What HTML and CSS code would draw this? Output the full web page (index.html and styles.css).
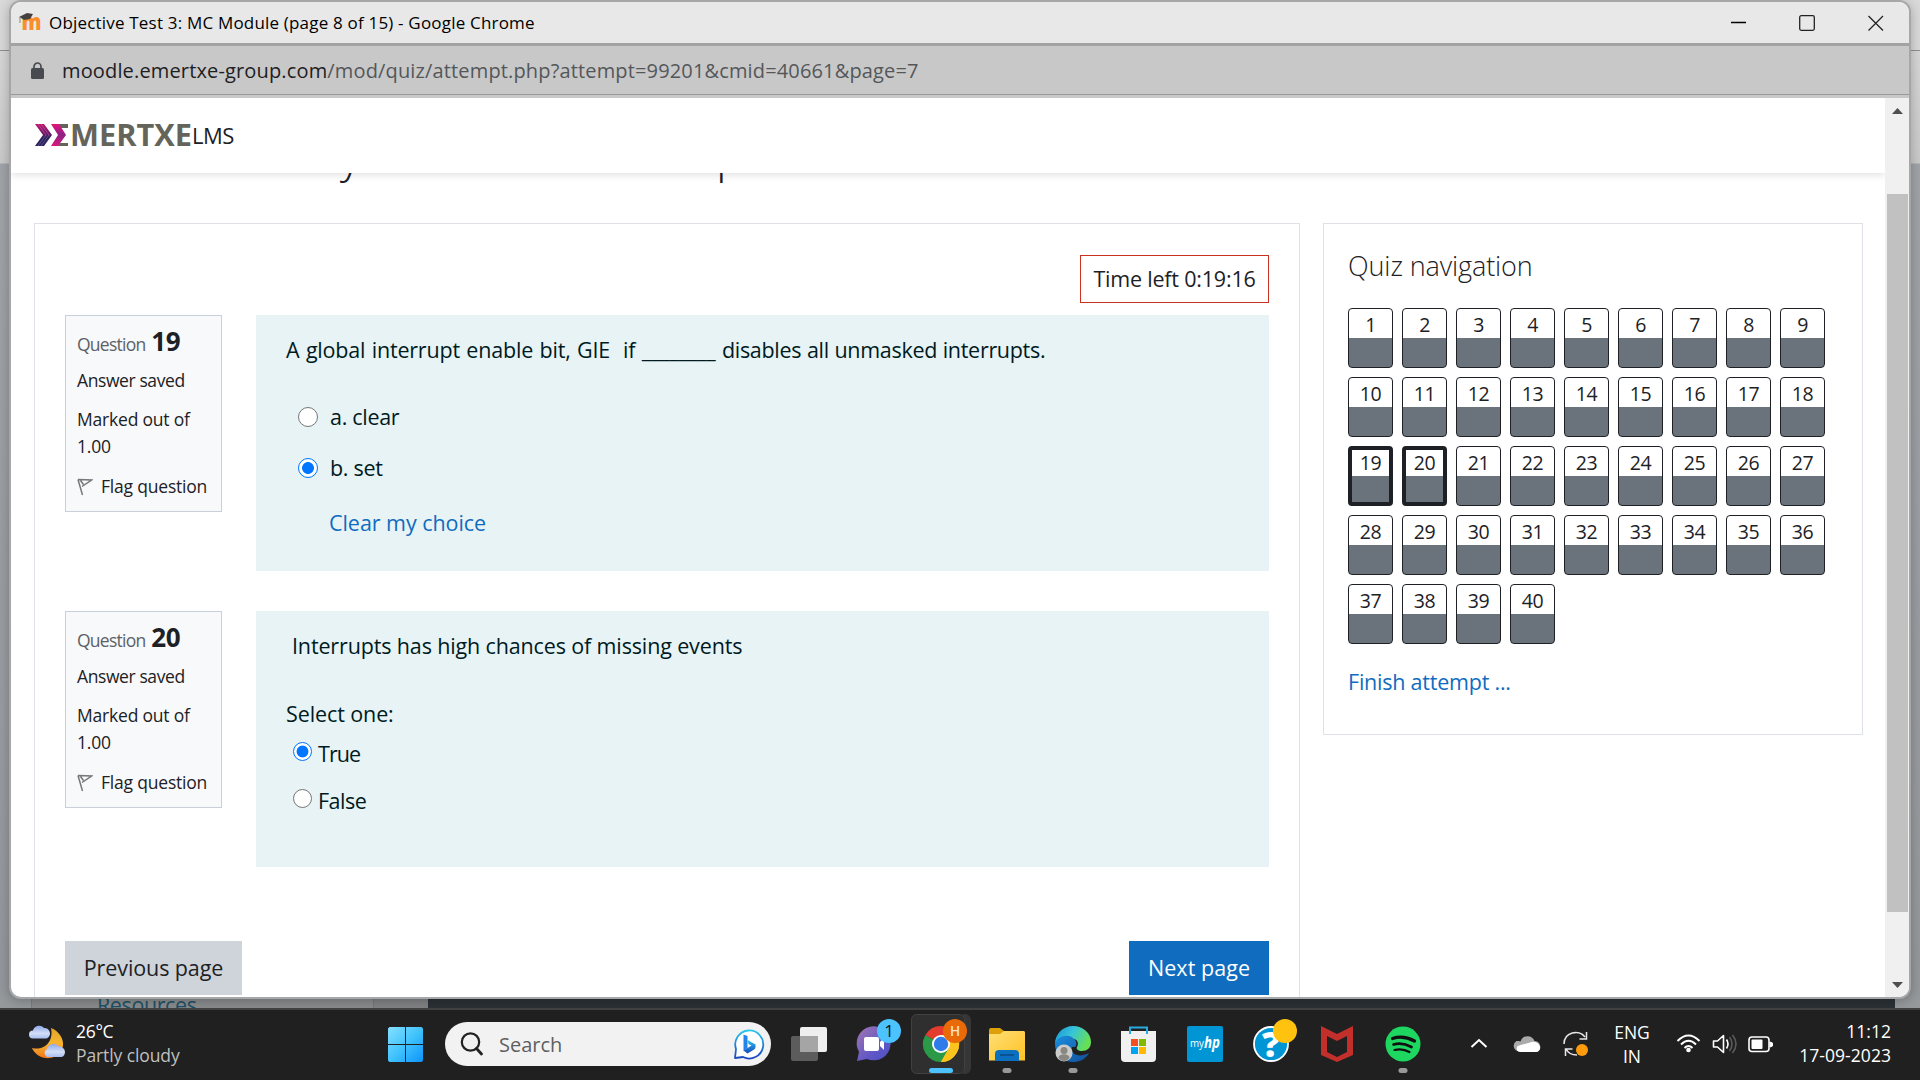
FILE: index.html
```html
<!DOCTYPE html>
<html lang="en">
<head>
<meta charset="utf-8">
<title>Objective Test 3: MC Module (page 8 of 15)</title>
<link rel="stylesheet" href="styles.css">
</head>
<body>
<div class="desktop">
  <div class="backdrop">
    <div class="backdrop-tabs"></div>
    <div class="backdrop-tools"></div>
    <div class="backdrop-page"></div>
    <div class="backdrop-foot">
      <div class="foot-side"></div>
      <div class="foot-list"><span>Resources</span></div>
      <div class="foot-gap"></div>
      <div class="foot-dark"></div>
      <div class="foot-side foot-right"></div>
    </div>
  </div>

  <div class="window">
    <div class="titlebar">
      <svg class="favicon" width="25" height="20" viewBox="0 0 25 20"><text x="3.5" y="18" font-family="Open Sans, sans-serif" font-weight="800" font-size="22" textLength="20" lengthAdjust="spacingAndGlyphs" fill="#f98e2b">m</text><path d="M1 5L9 1l6 1-3 5-6 1-3-2z" fill="#45403f"/><path d="M2 5v6" stroke="#8b8580" stroke-width="1"/></svg>
      <span class="title-text">Objective Test 3: MC Module (page 8 of 15) - Google Chrome</span>
      <svg class="controls" width="153" height="18" viewBox="0 0 153 18"><path d="M0 8.5h15" stroke="#000" stroke-width="1.3"/><rect x="68.7" y="1.7" width="14.6" height="14.6" rx="1.5" fill="none" stroke="#222" stroke-width="1.3"/><path d="M137.500 2l14.500 14.500M152 2l-14.500 14.500" stroke="#222" stroke-width="1.3"/></svg>
    </div>
    <div class="addressbar">
      <svg width="13" height="17" viewBox="0 0 13 17"><path d="M3 7V4.500a3.500 3.500 0 0 1 7 0V7" fill="none" stroke="#474b4f" stroke-width="1.7"/><rect y="6" width="13" height="11" rx="1.5" fill="#474b4f"/></svg>
      <span class="url"><b>moodle.emertxe-group.com</b>/mod/quiz/attempt.php?attempt=99201&amp;cmid=40661&amp;page=7</span>
    </div>
    <div class="viewport">
      <div class="page">
        <header class="site-header">
          <svg class="logo" width="158" height="26" viewBox="0 0 158 26">
            <defs>
              <linearGradient id="lg1" x1="0" y1="0" x2="0" y2="1"><stop offset="0" stop-color="#c01572"/><stop offset=".5" stop-color="#641a68"/><stop offset=".6" stop-color="#30235f"/><stop offset="1" stop-color="#2a2360"/></linearGradient>
              <linearGradient id="lg2" x1="0" y1="0" x2="0" y2="1"><stop offset="0" stop-color="#e3157a"/><stop offset=".5" stop-color="#8c2185"/><stop offset="1" stop-color="#e0167b"/></linearGradient>
            </defs>
            <path d="M0 2h9l8 11-8 11H0l8-11z" fill="url(#lg1)"/>
            <path d="M3 2l8 11-8 11M6 2l8 11-8 11" fill="none" stroke="#fff" stroke-opacity=".25" stroke-width=".8"/>
            <path d="M22 2h11v4h-8l5 7-6 8h9v3H20l5-6z" fill="#64645b"/>
            <path d="M16 2h8l7 11-8 11h-7l7-11z" fill="url(#lg2)"/>
            <text x="35" y="24" font-family="Open Sans, sans-serif" font-weight="700" font-size="30.500" textLength="122" lengthAdjust="spacingAndGlyphs" fill="#64645b">MERTXE</text>
          </svg>
          <span class="logo-lms">LMS</span>
        </header>
        <h1 class="page-heading"><span class="heading-y">y</span><span>p</span></h1>
        <div class="columns">
          <main class="card quiz">
            <div class="timer">Time left 0:19:16</div>

            <section class="question">
              <aside class="info">
                <h3>Question <b>19</b></h3>
                <p class="state">Answer saved</p>
                <p class="grade">Marked out of<br>1.00</p>
                <p class="flag"><svg width="16" height="18" viewBox="0 0 16 18"><path d="M1 1.500L5.500 17M1 1.500L14.500 2 5 8.500M3.500 2.500l3 4" fill="none" stroke="#777" stroke-width="1.5"/></svg>Flag question</p>
              </aside>
              <div class="formulation">
                <p class="qtext q19">A global interrupt enable bit, GIE &nbsp;if <span class="blank">________</span> <span class="rest">disables all unmasked interrupts.</span></p>
                <label class="choice first"><input type="radio" name="q19">a. clear</label>
                <label class="choice"><input type="radio" name="q19" checked>b. set</label>
                <a class="clear">Clear my choice</a>
              </div>
            </section>

            <section class="question">
              <aside class="info">
                <h3>Question <b>20</b></h3>
                <p class="state">Answer saved</p>
                <p class="grade">Marked out of<br>1.00</p>
                <p class="flag"><svg width="16" height="18" viewBox="0 0 16 18"><path d="M1 1.500L5.500 17M1 1.500L14.500 2 5 8.500M3.500 2.500l3 4" fill="none" stroke="#777" stroke-width="1.5"/></svg>Flag question</p>
              </aside>
              <div class="formulation">
                <p class="qtext q20">Interrupts has high chances of missing events</p>
                <p class="prompt">Select one:</p>
                <label class="tf"><input type="radio" name="q20" checked>True</label>
                <label class="tf"><input type="radio" name="q20">False</label>
              </div>
            </section>

            <div class="pager">
              <button class="btn secondary">Previous page</button>
              <button class="btn primary">Next page</button>
            </div>
          </main>

          <aside class="card nav">
            <h2>Quiz navigation</h2>
            <div class="nav-grid">
              <a>1</a><a>2</a><a>3</a><a>4</a><a>5</a><a>6</a><a>7</a><a>8</a><a>9</a>
              <a>10</a><a>11</a><a>12</a><a>13</a><a>14</a><a>15</a><a>16</a><a>17</a><a>18</a>
              <a class="current">19</a><a class="current">20</a><a>21</a><a>22</a><a>23</a><a>24</a><a>25</a><a>26</a><a>27</a>
              <a>28</a><a>29</a><a>30</a><a>31</a><a>32</a><a>33</a><a>34</a><a>35</a><a>36</a>
              <a>37</a><a>38</a><a>39</a><a>40</a>
            </div>
            <a class="finish">Finish attempt ...</a>
          </aside>
        </div>
      </div>
      <div class="scrollbar">
        <svg width="11" height="6" viewBox="0 0 11 6"><path d="M0 6L5.500 0 11 6z" fill="#505050"/></svg>
        <div class="thumb"></div>
        <svg class="down" width="11" height="6" viewBox="0 0 11 6"><path d="M0 0h11L5.500 6z" fill="#505050"/></svg>
      </div>
    </div>
  </div>

  <footer class="taskbar">
    <svg class="weather" width="38" height="36" viewBox="0 0 38 36">
      <defs><linearGradient id="moon" x1="0" y1="0" x2="0" y2="1"><stop offset="0" stop-color="#e0a32c"/><stop offset=".5" stop-color="#f7b52f"/><stop offset="1" stop-color="#f0781b"/></linearGradient>
      <linearGradient id="cl" x1="0" y1="0" x2="0" y2="1"><stop offset="0" stop-color="#8fa9ea"/><stop offset=".6" stop-color="#d3dff8"/><stop offset="1" stop-color="#a9bdf0"/></linearGradient></defs>
      <path d="M22 4c8 3 13 11 12 18-2 9-10 13-18 12C10 33 5 29 3 24c12 3 22-6 19-20z" fill="url(#moon)"/>
      <path d="M4 14.500a4 4 0 0 1 0-8c1-5 8-6.500 11-2.500 4-.5 6 3 6 5.500s-2 5-4 5z" fill="url(#cl)"/>
      <path d="M18 33a4.500 4.500 0 0 1 0-8c1-5 8-6.500 11-3 4 0 7 3 7 6s-2 5-4 5z" fill="url(#cl)"/>
    </svg>
    <div class="weather-text"><span>26°C</span><span class="dim">Partly cloudy</span></div>
    <svg class="start" width="35" height="35" viewBox="0 0 35 35">
      <defs><linearGradient id="win" x1="0" y1="0" x2="1" y2="1"><stop offset="0" stop-color="#86e0ff"/><stop offset=".5" stop-color="#41c3fc"/><stop offset="1" stop-color="#0c94fb"/></linearGradient></defs>
      <path d="M1.500 0H17v17H0V1.500zM18 0h15.500L35 1.500V17H18zM0 18h17v17H1.500L0 33.500zM18 18h17v15.500L33.500 35H18z" fill="url(#win)"/>
    </svg>
    <div class="search">
      <svg width="24" height="24" viewBox="0 0 24 24"><circle cx="10.500" cy="10" r="8.700" fill="none" stroke="#222" stroke-width="2.200"/><path d="M16.500 16.500l5 5.500" stroke="#222" stroke-width="2.800" stroke-linecap="round"/></svg>
      <span>Search</span>
      <svg class="bing" width="32" height="32" viewBox="0 0 32 32">
        <defs><linearGradient id="bg" x1="0" y1="0" x2="0" y2="1"><stop offset="0" stop-color="#28c7ee"/><stop offset="1" stop-color="#1b45bd"/></linearGradient></defs>
        <path d="M2 30l1-9A14 14 0 1 1 10 29z" fill="#fff" stroke="url(#bg)" stroke-width="1.800" stroke-linejoin="round"/>
        <path d="M10.500 6.500l4 1.500v12l-4 3z" fill="#2583ec"/><path d="M14.500 12l8 4.500c.5 4-1 5-3 6l-5 3-4-3 8-5-3-1.500z" fill="url(#bg)"/>
      </svg>
    </div>
    <nav class="apps">
      <svg viewBox="0 0 66 72"><rect x="15" y="28" width="27" height="25" rx="2" fill="#5c5c5c"/><rect x="24" y="19" width="27" height="25" rx="2" fill="#efefef"/><path d="M24 28h18v16H25l-1-1z" fill="#a5a5a5"/></svg>
      <svg viewBox="0 0 66 72"><defs><linearGradient id="chat" x1="0" y1="0" x2="1" y2="1"><stop offset="0" stop-color="#a477b0"/><stop offset=".6" stop-color="#6258c5"/><stop offset="1" stop-color="#4b50c5"/></linearGradient></defs><path d="M15 53l2-9a17 17 0 1 1 8 7z" fill="url(#chat)"/><rect x="22" y="29" width="15" height="14" rx="2" fill="#fff"/><path d="M38 34l4-4v12l-4-4z" fill="#fff"/><circle cx="47" cy="23" r="12" fill="#4cc2ff"/><text x="47" y="29" text-anchor="middle" font-family="Open Sans, sans-serif" font-size="17" fill="#111">1</text></svg>
      <svg viewBox="0 0 66 72"><path d="M55 6h2a6 6 0 0 1 6 6v48a6 6 0 0 1-6 6h-2z" fill="#363636"/><rect x="3.500" y="6.500" width="53" height="59" rx="5" fill="#2f2f2f" stroke="#414141"/><path d="M33 36L17.400 27A18 18 0 0 1 48.600 27z" fill="#e33b2e"/><path d="M33 36L48.600 27A18 18 0 0 1 33 54z" fill="#fcc31e"/><path d="M17.400 27A18 18 0 0 0 33 54L40.800 40.500 33 36z" fill="#2a9a48"/><path d="M33 27h15.600a18 18 0 0 1-15.600 27l7.800-13.500z" fill="#fcc31e"/><circle cx="33" cy="36" r="9" fill="#fff"/><circle cx="33" cy="36" r="7.200" fill="#2f7bea"/><circle cx="47" cy="23" r="12" fill="#e96a07"/><text x="47" y="28" text-anchor="middle" font-family="Open Sans, sans-serif" font-size="13.500" font-weight="600" fill="#ffe3cc">H</text><rect x="21" y="60" width="24" height="5" rx="2.500" fill="#4cc2ff"/></svg>
      <svg viewBox="0 0 66 72"><defs><linearGradient id="fold" x1="0" y1="0" x2="1" y2="1"><stop offset="0" stop-color="#ffdf76"/><stop offset="1" stop-color="#fec224"/></linearGradient></defs><path d="M15 22q0-2 2-2h9l4 3v4H15z" fill="#dda008"/><path d="M15 26h11l4-3h20l1 1v28.500H15z" fill="url(#fold)"/><path d="M21 53v-7q0-4 4-4h16q4 0 4 4v7z" fill="#0c70c0"/><path d="M26 47h14" stroke="#0a4880" stroke-width="1.500"/><rect x="28.500" y="60" width="9" height="5" rx="2.500" fill="#999"/></svg>
      <svg viewBox="0 0 66 72"><defs><linearGradient id="ed" x1="0" y1="0" x2="1" y2=".4"><stop offset="0" stop-color="#1992d6"/><stop offset=".5" stop-color="#36c4da"/><stop offset="1" stop-color="#66df57"/></linearGradient><linearGradient id="ed2" x1="0" y1="0" x2="1" y2="1"><stop offset="0" stop-color="#1a8fde"/><stop offset="1" stop-color="#124e99"/></linearGradient></defs><path d="M15 36c0-10 8-18 18-18s18 7 18 16c0 6-4 9-9 9-4 0-6-2-5-4 2-3 1-8-4-8-8 0-13 2-18 5z" fill="url(#ed)"/><path d="M15 36c2-8 14-11 19-5 3 3 3 6 1 8h-3c-2 8 8 11 17 6-4 7-10 9-16 9-10 0-18-8-18-18z" fill="url(#ed2)"/><circle cx="24" cy="45" r="8.500" fill="#ccc"/><circle cx="24" cy="42.500" r="3.500" fill="#8a8680"/><path d="M18.500 50c0-5 11-5 11 0-3 4-8 4-11 0z" fill="#8a8680"/><rect x="28.500" y="60" width="9" height="5" rx="2.500" fill="#999"/></svg>
      <svg viewBox="0 0 66 72"><path d="M15 23h35v27q0 4-4 4H19q-4 0-4-4z" fill="#f0f0f0"/><path d="M24 26v-6.500h17V26" fill="none" stroke="#29aae1" stroke-width="2"/><path d="M25 31h7v7h-7z" fill="#f25022"/><path d="M33 31h7v7h-7z" fill="#7fba00"/><path d="M25 39h7v7h-7z" fill="#00a4ef"/><path d="M33 39h7v7h-7z" fill="#ffb900"/></svg>
      <svg viewBox="0 0 66 72"><rect x="15" y="18" width="36" height="36" rx="2" fill="#0096d6"/><text x="18" y="39" font-family="Open Sans, sans-serif" font-size="10" fill="#fff" textLength="14" lengthAdjust="spacingAndGlyphs">my</text><text x="32" y="40" font-family="Open Sans, sans-serif" font-size="16" font-style="italic" font-weight="700" fill="#fff" textLength="16" lengthAdjust="spacingAndGlyphs">hp</text></svg>
      <svg viewBox="0 0 66 72"><circle cx="33" cy="36" r="17" fill="#0096d6" stroke="#fff" stroke-width="1.800"/><text x="33" y="49" text-anchor="middle" font-family="Open Sans, sans-serif" font-size="36" font-weight="800" fill="#fff">?</text><circle cx="47" cy="23" r="12" fill="#ffc20e"/></svg>
      <svg viewBox="0 0 66 72"><path d="M17 18l16 8 16-8v29l-16 7-16-7zM23 28v16l10 5 10-5V28l-10 5z" fill="#c32f2b" fill-rule="evenodd"/></svg>
      <svg viewBox="0 0 66 72"><circle cx="33" cy="36" r="17.500" fill="#1ed760"/><g fill="none" stroke="#101010" stroke-linecap="round"><path d="M22.500 30.500q11-3.500 22 2.500" stroke-width="3.200"/><path d="M23.500 36.500q9-2.500 18 2.500" stroke-width="2.700"/><path d="M24.500 42q8-2 15 2" stroke-width="2.200"/></g><rect x="28.500" y="60" width="9" height="5" rx="2.500" fill="#999"/></svg>
    </nav>
    <svg class="tray-icons" width="132" height="72" viewBox="0 0 132 72">
      <path d="M8.500 39l7.500-7 7.500 7" fill="none" stroke="#fff" stroke-width="2"/>
      <g transform="translate(-1.500 0)"><path d="M56 43a5.500 5.500 0 0 1-1-10c2 0 3 0 4 .5 2-7 12-7 14-.5 6 0 8 8 3 11z" fill="#aaa"/><path d="M56 43c-1-1-1-3 0-5l14-4c7-2 11 6 7 9q-1 1-3 1H59q-2 0-3-1z" fill="#fff"/></g>
      <g fill="none" stroke="#e8e8e8" stroke-width="1.500"><path d="M101 36c0-12 15-15 21-7M123.500 24v7h-7"/><path d="M114 47c-5 0-9-2-11-6M102.500 48v-7h7"/></g><circle cx="119" cy="42" r="6" fill="#ff9a0c"/>
    </svg>
    <div class="lang"><span>ENG</span><span>IN</span></div>
    <svg class="status" width="98" height="72" viewBox="0 0 98 72">
      <g fill="none" stroke="#fff" stroke-width="1.900"><path d="M1.500 33q11-11 22 0M5 36.500q7.500-7.500 15 0M8.500 40q4-4 8 0"/></g><circle cx="12.500" cy="42" r="2.300" fill="#fff"/>
      <path d="M37.500 33h4l6-5.500v17l-6-5.500h-4z" fill="none" stroke="#fff" stroke-width="1.600" stroke-linejoin="round"/><path d="M50.500 31.500q3 4.500 0 9" fill="none" stroke="#fff" stroke-width="1.600"/><path d="M53.500 29q5 7 0 14M56.500 27q7 9 0 18" fill="none" stroke="#5a5a5a" stroke-width="1.600"/>
      <rect x="73" y="29" width="20" height="14.500" rx="3" fill="none" stroke="#fff" stroke-width="1.600"/><rect x="75.500" y="31.500" width="11" height="9.500" rx="1" fill="#fff"/><path d="M94 34l2.500 1v3L94 39z" fill="#fff" stroke="#fff"/>
    </svg>
    <div class="clock"><span>11:12</span><span>17-09-2023</span></div>
  </footer>
</div>
</body>
</html>
```
FILE: styles.css
```css
* { box-sizing: border-box; }
html, body { margin: 0; padding: 0; }
body {
  font-family: "Open Sans", "Noto Sans", sans-serif;
  color: #1d2125;
  overflow: hidden;
}
p, h1, h2, h3 { margin: 0; font-weight: 400; }

.desktop {
  position: relative;
  width: 1920px;
  height: 1080px;
  display: flex;
  flex-direction: column;
  overflow: hidden;
}

/* Browser window that sits behind the quiz popup */
.backdrop { height: 1008px; display: flex; flex-direction: column; }
.backdrop-tabs { height: 51px; background: #d9d9d9; border-bottom: 1px solid #8f8f8f; }
.backdrop-tools { height: 112px; background: linear-gradient(#d7d7d7, #cacaca); }
.backdrop-page { flex: 1; background: linear-gradient(#a0a4a8, #94979b); border-top: 1px solid #b4b6b9; }
.backdrop-foot { height: 13px; display: flex; overflow: hidden; }
.foot-side { width: 31px; background: #96999c; }
.foot-list { width: 342px; background: #8b8c8d; padding-left: 65px; border-left: 1px solid #7c7e80; }
.foot-list span { display: block; margin-top: -3px; font-size: 21.5px; line-height: 26px; letter-spacing: -.4px; color: #1d5269; }
.foot-gap { width: 55px; background: #828384; border-left: 1px solid #777; }
.foot-dark { flex: 1; background: #2b3136; }
.foot-right { width: 25px; }

/* Popup window */
.window {
  position: absolute;
  left: 11px;
  top: 2px;
  width: 1898px;
  height: 995px;
  display: flex;
  flex-direction: column;
  background: #fff;
  border-radius: 10px;
  overflow: hidden;
}
.desktop::before {
  content: "";
  position: absolute;
  left: 9px;
  top: 0;
  width: 1902px;
  height: 999px;
  border-radius: 12px;
  background: #a6a7a8;
  box-shadow: 0 2px 12px rgba(0, 0, 0, .25);
}
.titlebar {
  height: 44px;
  padding: 0 25px 3px 7px;
  display: flex;
  align-items: center;
  background: #e8e8e8;
  border-bottom: 3px solid #a3a3a3;
}
.favicon { margin-top: 1px; overflow: visible; }
.title-text { margin-left: 6px; padding-top: 4px; flex: 1; font-size: 17px; line-height: 24px; letter-spacing: .19px; color: #000; white-space: nowrap; }
.controls { margin-top: 4px; }
.addressbar {
  height: 49px;
  display: flex;
  align-items: center;
  gap: 18px;
  padding-left: 20px;
  background: #c8c8c8;
  border-bottom: 1px solid #9a9a9a;
}
.url { font-size: 20px; letter-spacing: .15px; color: #54575a; white-space: nowrap; }
.url b { font-weight: 400; color: #1d2023; }
.viewport { flex: 1; display: flex; border-top: 3px solid #c8c8c8; min-height: 0; }
.page { width: 1874px; overflow: hidden; }

.site-header {
  position: relative;
  z-index: 1;
  height: 75px;
  display: flex;
  align-items: center;
  padding-left: 24px;
  background: #fff;
  box-shadow: 0 2px 8px rgba(0, 0, 0, .12);
}
.logo { margin-top: -1px; overflow: visible; }
.logo-lms { margin: -2px 0 0 -1px; font-size: 22px; line-height: 30px; letter-spacing: -.5px; }
.page-heading {
  height: 44px;
  margin: -41px 0 47px;
  padding-left: 329px;
  display: flex;
  font-size: 47px;
  font-weight: 350;
  line-height: 44px;
}
.heading-y { width: 376px; }

.columns { display: flex; align-items: flex-start; gap: 23px; padding-left: 23px; }
.card { border: 1px solid #dee2e6; background: #fff; }
.quiz { width: 1266px; height: 900px; padding: 31px 30px 0; display: flex; flex-direction: column; }
.timer {
  align-self: flex-end;
  width: 189px;
  height: 48px;
  margin-bottom: 12px;
  border: 1px solid #ca3120;
  text-align: center;
  font-size: 21.5px;
  line-height: 46px;
  letter-spacing: -.2px;
  white-space: nowrap;
}
.question { display: flex; align-items: flex-start; gap: 34px; margin-bottom: 40px; }
.info {
  width: 157px;
  height: 197px;
  padding: 12px 0 0 11px;
  border: 1px solid #cad0d7;
  background: #f8f9fa;
  font-size: 17.5px;
  line-height: 27px;
  letter-spacing: -.2px;
  white-space: nowrap;
}
.info h3 { height: 39px; line-height: 27px; font-size: 17.5px; color: #5c6166; letter-spacing: -.75px; }
.info h3 b { margin-left: 2px; font-size: 26px; letter-spacing: -.4px; color: #1d2125; }
.info p { margin-bottom: 12px; }
.info .state { letter-spacing: -.4px; }
.info .grade { margin-bottom: 13px; }
.flag { display: flex; align-items: center; gap: 8px; }
.formulation {
  width: 1013px;
  height: 256px;
  padding: 18px 0 0 30px;
  display: flex;
  flex-direction: column;
  align-items: flex-start;
  background: #e7f3f5;
  color: #001a1e;
  font-size: 21.5px;
  line-height: 34px;
  letter-spacing: -.5px;
  white-space: nowrap;
}
input[type="radio"] {
  appearance: none;
  width: 20px;
  height: 20px;
  margin: 0;
  border: 1.5px solid #767676;
  border-radius: 50%;
  background: #fff;
}
input[type="radio"]:checked {
  border-color: #0075ff;
  background: radial-gradient(circle, #0075ff 5.5px, #fff 6.3px);
}
.q19 { letter-spacing: -.2px; word-spacing: 1.1px; }
.blank { letter-spacing: -.2px; }
.rest { letter-spacing: -.3px; word-spacing: .4px; }
.choice { height: 51px; padding-left: 12px; display: flex; align-items: flex-start; gap: 12px; letter-spacing: -.3px; }
.choice input { margin-top: 7px; }
.choice.first { margin-top: 33px; }
.clear { margin: 4px 0 0 43px; color: #0f6cbf; letter-spacing: -.05px; }
.q20 { padding-left: 6px; letter-spacing: -.14px; }
.prompt { margin-top: 34px; letter-spacing: -.1px; }
.tf { height: 47px; padding-left: 7px; display: flex; gap: 6px; letter-spacing: -.5px; }
.prompt + .tf { margin-top: 6px; letter-spacing: -.9px; }
.tf input { width: 19px; height: 19px; margin-top: 5px; }
.pager { display: flex; justify-content: space-between; margin-top: 34px; }
.btn {
  height: 54px;
  padding: 0;
  border: 0;
  font: 21.5px/54px "Open Sans", "Noto Sans", sans-serif;
  letter-spacing: -.1px;
}
.secondary { width: 177px; background: #ced4da; color: #1d2125; }
.primary { width: 140px; background: #0f6cbf; color: #fff; letter-spacing: .05px; }

.nav { width: 540px; height: 512px; padding: 24px 0 0 24px; }
.nav h2 { font-size: 27px; line-height: 36px; font-weight: 300; letter-spacing: -.1px; margin-bottom: 24px; }
.nav-grid { display: grid; grid-template-columns: repeat(9, 45px); gap: 9px; }
.nav-grid a {
  height: 60px;
  border: 1px solid #1d2125;
  border-radius: 4px;
  background: linear-gradient(#fff 29px, #6a737b 29px);
  text-align: center;
  font-size: 19.5px;
  line-height: 32px;
  letter-spacing: -.5px;
}
.nav-grid .current {
  border-width: 4px;
  line-height: 26px;
  background: linear-gradient(#fff 26px, #6a737b 26px);
}
.finish { display: block; margin-top: 21px; font-size: 21.5px; line-height: 34px; letter-spacing: -.22px; color: #0f6cbf; }

.scrollbar { width: 24px; padding-top: 10px; display: flex; flex-direction: column; align-items: center; background: #f0f0f0; }
.thumb { width: 21px; height: 718px; margin-top: 80px; background: #c1c1c1; }
.down { margin-top: 70px; }

/* Taskbar */
.taskbar {
  position: relative;
  height: 72px;
  display: flex;
  align-items: center;
  padding-left: 29px;
  background: #202020;
  color: #fff;
  font-size: 17.5px;
  line-height: 24px;
  box-shadow: inset 0 2px #404040;
}
.taskbar svg { flex: none; }
.weather { margin-top: -4px; }
.weather-text { width: 312px; margin: -2px 0 0 9px; display: flex; flex-direction: column; letter-spacing: -.3px; }
.dim { color: #bfbfbf; letter-spacing: -.1px; }
.search {
  width: 326px;
  height: 44px;
  margin: 0 5px 0 22px;
  padding: 0 6px 0 15px;
  border-radius: 22px;
  display: flex;
  align-items: center;
  background: #f2f2f2;
  color: #5f5f5f;
  font-size: 20px;
}
.search span { flex: 1; margin: 1px 0 0 15px; }
.apps { display: flex; }
.apps svg { width: 66px; height: 72px; }
.tray-icons { margin-left: 27px; }
.lang { width: 70px; display: flex; flex-direction: column; align-items: center; margin-left: 2px; }
.status { margin-left: 9px; }
.clock { flex: 1; margin-top: -2px; padding-right: 29px; display: flex; flex-direction: column; align-items: flex-end; letter-spacing: .05px; }
```
